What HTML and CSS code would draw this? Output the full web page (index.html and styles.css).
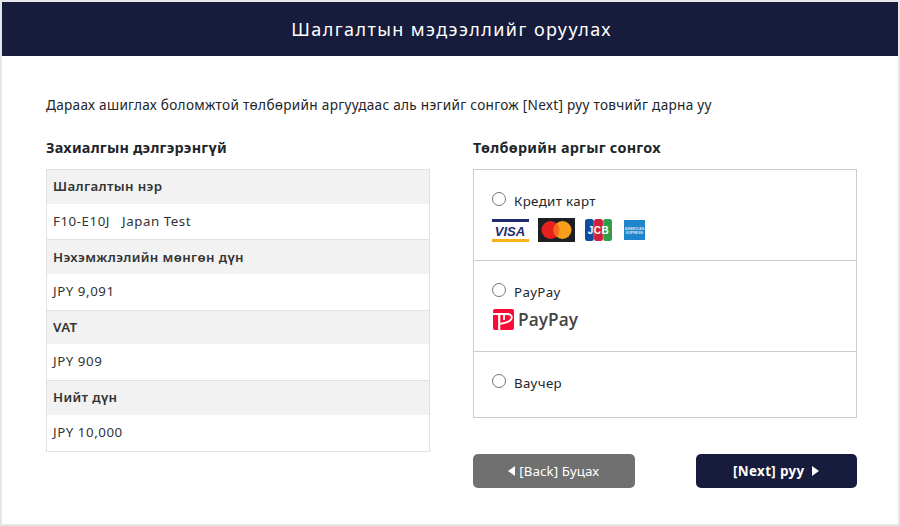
FILE: index.html
```html
<!DOCTYPE html>
<html lang="mn">
<head>
<meta charset="utf-8">
<title>Шалгалтын мэдээллийг оруулах</title>
<link rel="stylesheet" href="styles.css">
</head>
<body>
<div class="frame">
  <header class="top"><h1>Шалгалтын мэдээллийг оруулах</h1></header>
  <main class="content">
    <p class="intro">Дараах ашиглах боломжтой төлбөрийн аргуудаас аль нэгийг сонгож [Next] руу товчийг дарна уу</p>
    <div class="cols">
      <section class="col">
        <h2>Захиалгын дэлгэрэнгүй</h2>
        <div class="table">
          <div class="th">Шалгалтын нэр</div>
          <div class="td">F10-E10J&nbsp;&nbsp; Japan Test</div>
          <div class="th">Нэхэмжлэлийн мөнгөн дүн</div>
          <div class="td">JPY 9,091</div>
          <div class="th">VAT</div>
          <div class="td">JPY 909</div>
          <div class="th">Нийт дүн</div>
          <div class="td">JPY 10,000</div>
        </div>
      </section>
      <section class="col">
        <h2>Төлбөрийн аргыг сонгох</h2>
        <div class="pay">
          <div class="opt opt-card">
            <label class="radio"><span class="dot"></span><span>Кредит карт</span></label>
            <div class="logos">
              <svg class="visa" width="37" height="23" viewBox="0 0 37 23">
                <rect width="37" height="3" fill="#1f2a70"/>
                <rect y="20" width="37" height="3" fill="#f9b21c"/>
                <text x="18" y="16.6" text-anchor="middle" class="visa-t">VISA</text>
              </svg>
              <svg width="37" height="24" viewBox="0 0 37 24">
                <rect width="37" height="24" fill="#1c2024"/>
                <circle cx="12.5" cy="12" r="9" fill="#e8201f"/>
                <circle cx="24.5" cy="12" r="9" fill="#f79e1b"/>
                <path d="M18.5 5.3a9 9 0 0 1 0 13.4a9 9 0 0 1 0-13.4z" fill="#f2691c"/>
              </svg>
              <svg width="27" height="22" viewBox="0 0 27 22">
                <rect x="0" y="0" width="8.8" height="22" rx="2.5" fill="#0d4f9e"/>
                <rect x="9.1" y="0" width="8.8" height="22" rx="2.5" fill="#cf1f3a"/>
                <rect x="18.2" y="0" width="8.8" height="22" rx="2.5" fill="#2f9e48"/>
                <text x="13.5" y="15" text-anchor="middle" class="jcb-t">JCB</text>
              </svg>
              <svg class="amex" width="21" height="20" viewBox="0 0 21 20">
                <rect width="21" height="20" fill="#1f86cb"/>
                <text x="10.5" y="9.5" text-anchor="middle" class="amex-t">AMERICAN</text>
                <text x="10.5" y="14" text-anchor="middle" class="amex-t">EXPRESS</text>
              </svg>
            </div>
          </div>
          <div class="opt opt-pp">
            <label class="radio"><span class="dot"></span><span>PayPay</span></label>
            <div class="pp-logo">
              <svg width="21" height="21" viewBox="0 0 21 21">
                <rect width="21" height="21" rx="2" fill="#fb0a35"/>
                <path d="M0 5H14.5C18.5 5 19.5 8 18.2 10.2C16.8 12.6 12 14.2 6.5 14.8" fill="none" stroke="#fff" stroke-width="1.8"/>
                <path d="M6.2 5.5V21" fill="none" stroke="#fff" stroke-width="2.2"/>
                <path d="M11 5.5V11" fill="none" stroke="#fff" stroke-width="1.8"/>
              </svg>
              <span class="pp-text">PayPay</span>
            </div>
          </div>
          <div class="opt opt-v">
            <label class="radio"><span class="dot"></span><span>Ваучер</span></label>
          </div>
        </div>
        <div class="btns">
          <button class="btn back" type="button"><span class="tri tri-l"></span>[Back] Буцах</button>
          <button class="btn next" type="button">[Next] руу<span class="tri tri-r"></span></button>
        </div>
      </section>
    </div>
  </main>
</div>
</body>
</html>
```
FILE: styles.css
```css
* { box-sizing: border-box; }
html, body { margin: 0; padding: 0; background: #fff; }
body { font-family: "Noto Sans", "Open Sans", sans-serif; color: #212529; }
.frame { width: 900px; height: 526px; border: 2px solid #e6e6e6; background: #fff; }
.top { height: 54px; padding-left: 3px; background: #171c3c; display: flex; align-items: center; justify-content: center; }
.top h1 { margin: 0; font-size: 18px; font-weight: 400; letter-spacing: 1.43px; color: #fff; }
.content { padding: 39px 42px 0 44px; }
.intro { margin: 0 0 23px; font-size: 13.6px; line-height: 20px; letter-spacing: 0.29px; }
.cols { display: grid; grid-template-columns: 384px 384px; column-gap: 43px; }
h2 { margin: 0 0 11px; font-size: 14.4px; line-height: 20px; font-weight: 700; letter-spacing: 0.25px; }
.table { border: 1px solid #dee2e6; font-size: 13.3px; letter-spacing: 0.35px; color: #333; }
.th, .td { padding: 0 6px; display: flex; align-items: center; }
.th { height: 33.75px; padding-bottom: 1px; background: #f2f2f2; font-weight: 600; }
.td { height: 36.5px; padding-bottom: 2px; letter-spacing: 0.55px; border-bottom: 1px solid #dee2e6; }
.td:last-child { border-bottom: 0; }
.pay { border: 1px solid #ccc; font-size: 13.3px; letter-spacing: 0.35px; }
.opt { padding: 21px 18px 0; border-bottom: 1px solid #ccc; }
.opt:last-child { border-bottom: 0; }
.opt-card { height: 91px; }
.opt-pp { height: 91px; }
.opt-v { height: 65px; }
.radio { display: flex; align-items: center; gap: 8px; height: 20px; }
.dot { width: 14px; height: 14px; border: 1px solid #767676; border-radius: 50%; background: #fff; margin-top: -5px; }
.logos { display: flex; align-items: center; gap: 10px; margin-top: 7px; height: 24px; }
.logos .visa { margin-right: -1px; }
.logos .amex { margin-left: 2px; }
.visa-t { font: italic 700 13px "Liberation Sans", sans-serif; fill: #1f2a70; letter-spacing: 0; }
.jcb-t { font: 700 10px "Liberation Sans", sans-serif; fill: #fff; letter-spacing: 0.5px; }
.amex-t { font: 700 3.6px "Liberation Sans", sans-serif; fill: #cfe6f5; letter-spacing: 0; }
.pp-logo { display: flex; align-items: center; gap: 4px; margin-top: 7px; margin-left: 1px; height: 21px; }
.pp-text { font-family: "Open Sans", sans-serif; font-size: 17.2px; font-weight: 600; letter-spacing: 0.1px; color: #444; line-height: 21px; }
.btns { display: flex; justify-content: space-between; margin-top: 36px; }
.btn { width: 161.5px; height: 34px; border: 0; border-radius: 5px; color: #fff; font-family: inherit; font-size: 13.3px; display: flex; align-items: center; justify-content: center; gap: 4px; padding: 0; }
.back { background: #707070; letter-spacing: 0.1px; }
.next { background: #171c3c; font-weight: 700; gap: 8px; letter-spacing: 0.4px; }
.tri { width: 0; height: 0; border-top: 5px solid transparent; border-bottom: 5px solid transparent; }
.tri-l { border-right: 7px solid #fff; }
.tri-r { border-left: 7px solid #fff; }
```
